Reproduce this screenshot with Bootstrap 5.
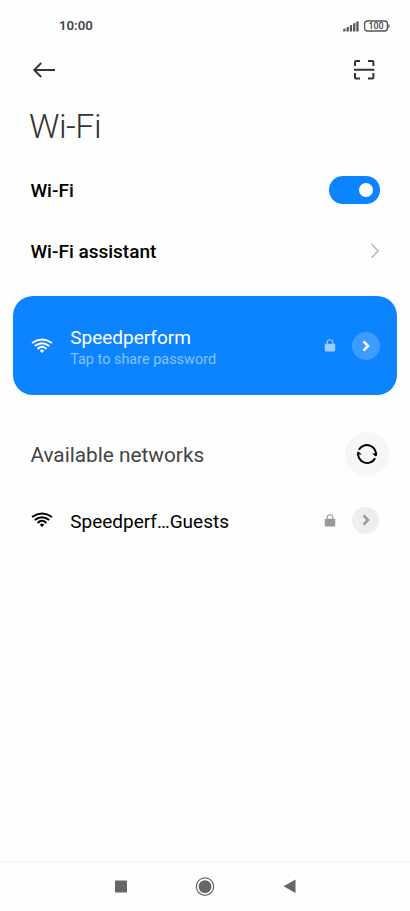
<!DOCTYPE html>
<html lang="en">
<head>
<meta charset="utf-8">
<meta name="viewport" content="width=device-width, initial-scale=1">
<title>Wi-Fi</title>
<link href="https://cdn.jsdelivr.net/npm/bootstrap@5.3.0/dist/css/bootstrap.min.css" rel="stylesheet">
<style>
body{font-family:Roboto,"Liberation Sans",sans-serif;color:#000;background:#fefefe;line-height:1}
svg{display:block;flex:none}
.screen{height:911px;overflow:hidden}
.statusbar{height:50px;padding:2px 20px 0 59px}
.clock{font-size:13.2px;font-weight:600;color:#444}
.battery{width:27px;height:13px}
.appbar{height:40px;padding:0 35px 0 32px}
.title{font-size:34px;font-weight:300;color:#333;height:70px;padding:2px 0 0 29px;letter-spacing:-.5px}
.setting{height:61px;padding:0 30px 0 30.4px;font-size:19px;font-weight:500}
.setting>:last-child{margin-bottom:2px}
.switch-on{width:51px;height:28px;border-radius:14px;background:#0d84ff;padding-right:7px}
.knob{width:14px;height:14px;background:#fff}
.connected{height:99px;margin:14px 13px 0;border-radius:20px;background:#0d84ff;padding:0 17px 0 18px;color:#fff}
.ssid{font-size:19px;line-height:22px}
.hint{font-size:14.45px;line-height:16px;margin-top:3px;color:#86c2ff}
.names{margin-left:17.2px;padding-top:3px}
.go{width:28px;height:28px;background:#3d9cff;margin-left:16px}
.go-gray{width:27px;height:27px;background:#eee;margin-left:16px}
.section{height:67px;padding:0 21px 0 30.4px;margin-top:25px;font-size:20.8px;color:#444}
.refresh{width:44px;height:44px;background:#f6f6f6}
.network{height:66px;padding:0 31px}
.navkeys{height:50px;border-top:1px solid #f1f1f1;padding:0 114px}
</style>
</head>
<body>
<svg width="0" height="0" class="position-absolute" aria-hidden="true">
  <symbol id="wifi" viewBox="0 0 22 16">
    <g fill="none" stroke="currentColor" stroke-width="1.9">
      <path d="M1 5Q11-1.9 21 5"/><path d="M3.8 8.1Q11 2.2 18.2 8.1"/><path d="M6.6 11Q11 6.7 15.4 11"/>
    </g>
    <path d="M8.8 12.7Q11 10.4 13.2 12.7L11 15.1Z" fill="currentColor"/>
  </symbol>
  <symbol id="lock" viewBox="0 0 12 13">
    <path d="M3.2 6V3.5a2.8 2.8 0 0 1 5.6 0V6" fill="none" stroke="currentColor" stroke-width="1.1"/>
    <rect x=".8" y="4.8" width="10.4" height="7.6" rx=".8" fill="currentColor"/>
  </symbol>
  <symbol id="chevron" viewBox="0 0 8 12">
    <path d="M1.5 1.4 6 6 1.5 10.6" fill="none" stroke="currentColor" stroke-width="2.6"/>
  </symbol>
</svg>
<main class="screen d-flex flex-column">
  <div class="statusbar d-flex align-items-center">
    <span class="clock me-auto">10:00</span>
    <svg width="16" height="11" viewBox="0 0 16 11" fill="#555"><path d="M.2 8 2.5 7.4V10.5H.2zM3.5 6.5 5.8 5.8V10.5H3.5zM6.8 4.5 9.1 3.7V10.5H6.8zM10.1 2.5 12.4 1.7V10.5h-2.3zM13.3 .7 15.6 0V10.5h-2.3z"/></svg>
    <svg class="battery ms-1" viewBox="0 0 27 13"><rect x="1.6" y="1" width="22.8" height="10" rx="2.8" fill="none" stroke="#555" stroke-width="1.3"/><path d="M25.4 4q1.3.3 1.3 2.1t-1.3 2.1z" fill="#555"/><text x="13" y="9.2" text-anchor="middle" font-size="8.8" font-weight="500" fill="#444">100</text></svg>
  </div>
  <div class="appbar d-flex align-items-center justify-content-between">
    <svg width="24" height="18" viewBox="0 0 24 18" fill="none" stroke="#333" stroke-width="1.8"><path d="M23 9H2.2M9.2 2 2.2 9l7 7"/></svg>
    <svg width="24" height="22" viewBox="0 0 24 22" fill="none" stroke="#333" stroke-width="2"><path d="M4 7V3.2Q4 2 5.2 2H9M17 2h4.4Q22.4 2 22.4 3.2V7M22.4 14v4.1Q22.4 19.6 21.4 19.6H17M9 19.6H5.2Q4 19.6 4 18.4V14M3 10.7H23.4"/></svg>
  </div>
  <h1 class="title d-flex align-items-center m-0">Wi-Fi</h1>
  <div class="setting d-flex align-items-center justify-content-between">
    <span>Wi-Fi</span>
    <span class="switch-on d-flex align-items-center justify-content-end"><span class="knob rounded-circle"></span></span>
  </div>
  <div class="setting d-flex align-items-center justify-content-between">
    <span>Wi-Fi assistant</span>
    <svg width="10" height="16" viewBox="0 0 10 16" fill="none" stroke="#aaa" stroke-width="1.2"><path d="M1.4 1.2 8.2 8l-6.8 6.8"/></svg>
  </div>
  <section class="connected d-flex align-items-center">
    <svg width="22" height="16"><use href="#wifi"/></svg>
    <div class="names me-auto"><div class="ssid">Speedperform</div><div class="hint">Tap to share password</div></div>
    <svg width="12" height="13" color="#9ecdff"><use href="#lock"/></svg>
    <span class="go rounded-circle d-flex align-items-center justify-content-center"><svg width="8" height="12"><use href="#chevron"/></svg></span>
  </section>
  <div class="section d-flex align-items-center justify-content-between">
    <span class="pt-1">Available networks</span>
    <span class="refresh rounded-circle d-flex align-items-center justify-content-center">
      <svg width="22" height="22" viewBox="0 0 22 22" fill="none" stroke="#000" stroke-width="2"><path d="M2.9 6.8A9.1 9.1 0 0 1 19.8 13M19.1 15.2A9.1 9.1 0 0 1 2.2 9"/><path d="M16.2 10.4 19.6 13.6 21.4 10.4zM5.8 11.6 2.4 8.4.6 11.6z" fill="#000" stroke="none"/></svg>
    </span>
  </div>
  <div class="network d-flex align-items-center">
    <svg width="22" height="16"><use href="#wifi"/></svg>
    <div class="names ssid me-auto">Speedperf…Guests</div>
    <svg width="12" height="13" color="#999"><use href="#lock"/></svg>
    <span class="go-gray rounded-circle d-flex align-items-center justify-content-center"><svg width="8" height="12" color="#999"><use href="#chevron"/></svg></span>
  </div>
  <footer class="navkeys d-flex align-items-center justify-content-between mt-auto">
    <svg width="14" height="14" viewBox="0 0 14 14"><rect x="1" y=".5" width="12" height="12" rx=".5" fill="#666"/></svg>
    <svg width="22" height="20" viewBox="0 0 22 20"><circle cx="10" cy="9.6" r="8.7" fill="none" stroke="#666" stroke-width="1.2"/><circle cx="10" cy="9.6" r="6.4" fill="#666"/></svg>
    <svg width="13" height="15" viewBox="0 0 13 15"><path d="M.5 7.2 12.5.4V14z" fill="#666"/></svg>
  </footer>
</main>
<script src="https://cdn.jsdelivr.net/npm/bootstrap@5.3.0/dist/js/bootstrap.bundle.min.js"></script>
</body>
</html>
